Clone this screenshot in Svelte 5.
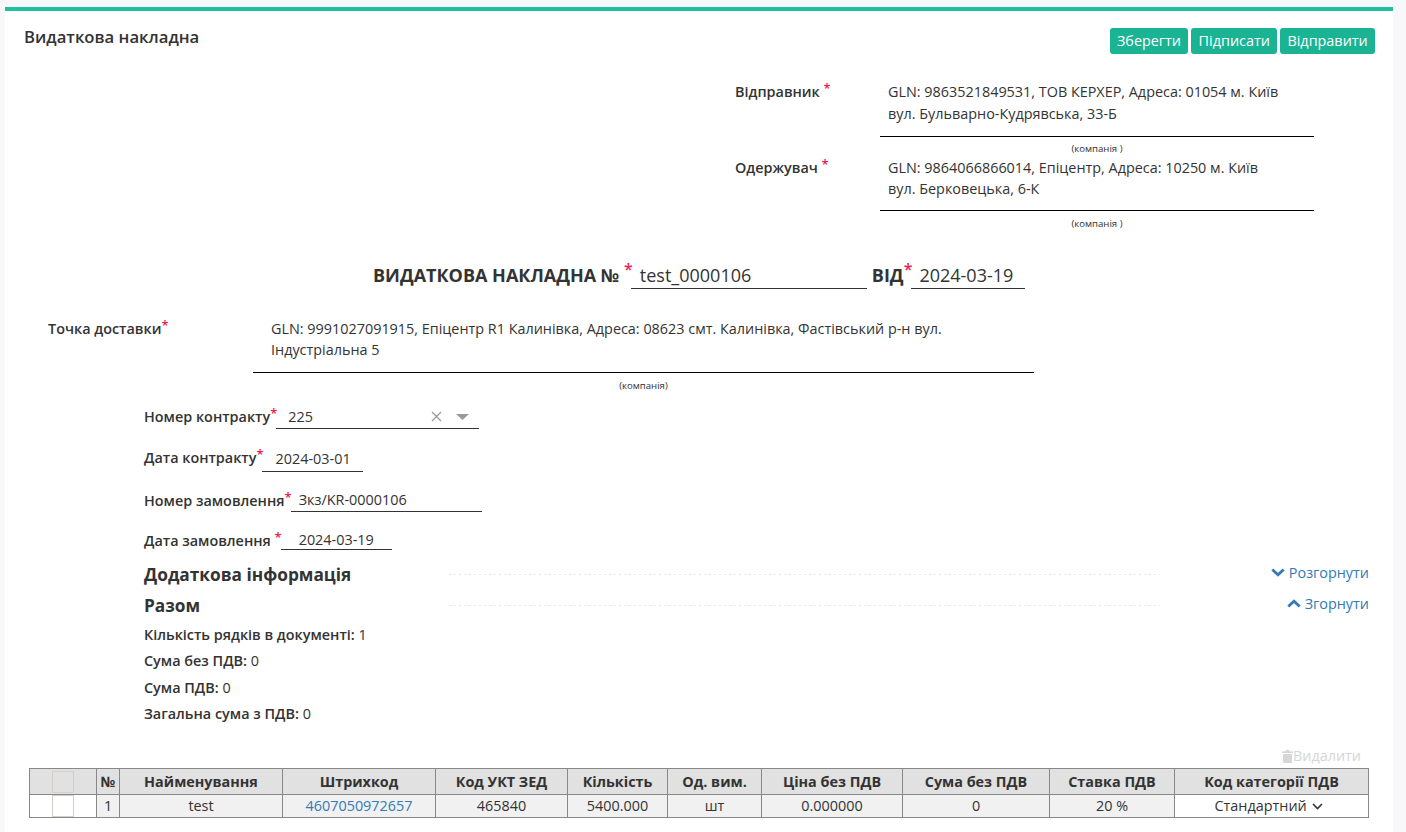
<script>
  const cols = [67, 23, 163, 153, 132, 100, 94, 141, 147, 125, 194];
  const heads = ['', '№', 'Найменування', 'Штрихкод', 'Код УКТ ЗЕД', 'Кількість', 'Од. вим.', 'Ціна без ПДВ', 'Сума без ПДВ', 'Ставка ПДВ', 'Код категорії ПДВ'];
  const cells = ['1', 'test', '4607050972657', '465840', '5400.000', 'шт', '0.000000', '0', '20 %'];
  const totals = [
    ['Кількість рядків в документі:', '1'],
    ['Сума без ПДВ:', '0'],
    ['Сума ПДВ:', '0'],
    ['Загальна сума з ПДВ:', '0']
  ];
</script>

<div class="page">
  <main class="card">
    <header class="top">
      <h5>Видаткова накладна</h5>
      <div class="btns">
        <button>Зберегти</button><button>Підписати</button><button>Відправити</button>
      </div>
    </header>

    <section class="party first">
      <div class="plabel">Відправник <sup>*</sup></div>
      <div class="pbody">
        <div class="ptext">GLN: 9863521849531, ТОВ КЕРХЕР, Адреса: 01054 м. Київ<br />вул. Бульварно-Кудрявська, 33-Б</div>
        <div class="cap">(компанія )</div>
      </div>
    </section>
    <section class="party second">
      <div class="plabel">Одержувач <sup>*</sup></div>
      <div class="pbody">
        <div class="ptext">GLN: 9864066866014, Епіцентр, Адреса: 10250 м. Київ<br />вул. Берковецька, 6-К</div>
        <div class="cap">(компанія )</div>
      </div>
    </section>

    <div class="doc">
      <span class="dt">ВИДАТКОВА НАКЛАДНА № <sup>*</sup></span>
      <span class="dv num">test_0000106</span>
      <span class="dt vid">ВІД<sup>*</sup></span>
      <span class="dv date">2024-03-19</span>
    </div>

    <section class="delivery">
      <div class="dlabel">Точка доставки<sup>*</sup></div>
      <div class="dbody">
        <div class="dtext">GLN: 9991027091915, Епіцентр R1 Калинівка, Адреса: 08623 смт. Калинівка, Фастівський р-н вул. Індустріальна 5</div>
        <div class="cap">(компанія)</div>
      </div>
    </section>

    <div class="fields">
      <div class="field f1">
        <b>Номер контракту<sup>*</sup></b>
        <span class="val sel">
          <span class="grow">225</span>
          <svg class="x" width="11" height="11" viewBox="0 0 11 11"><path d="M1 1l9 9M10 1l-9 9" stroke="#999" stroke-width="1.3" fill="none" /></svg>
          <svg class="tri" width="13" height="6" viewBox="0 0 13 6"><path d="M0 0h13L6.5 6z" fill="#999" /></svg>
        </span>
      </div>
      <div class="field f2"><b>Дата контракту<sup>*</sup></b><span class="val">2024-03-01</span></div>
      <div class="field f3"><b>Номер замовлення<sup>*</sup></b><span class="val">Зкз/KR-0000106</span></div>
      <div class="field f4"><b>Дата замовлення <sup>*</sup></b><span class="val">2024-03-19</span></div>
    </div>

    <div class="sec s1">
      <h3>Додаткова інформація</h3>
      <i class="dots"></i>
      <a href="#a" class="tog">
        <svg width="14" height="9" viewBox="0 0 14 9"><path d="M1.300 1.500l5.700 5.300 5.700-5.300" stroke="#337ab7" stroke-width="2.800" fill="none" /></svg>Розгорнути
      </a>
    </div>
    <div class="sec s2">
      <h3>Разом</h3>
      <i class="dots"></i>
      <a href="#a" class="tog">
        <svg width="14" height="9" viewBox="0 0 14 9"><path d="M1.300 7.500l5.700-5.300 5.700 5.300" stroke="#337ab7" stroke-width="2.800" fill="none" /></svg>Згорнути
      </a>
    </div>

    <div class="totals">
      {#each totals as [k, v]}
        <div class="trow"><b>{k}</b> {v}</div>
      {/each}
    </div>

    <div class="del">
      <svg width="11" height="13" viewBox="0 0 11 13"><path d="M4 0h3l1 1.500h3V3H0V1.500h3zM1 4h9v8a1 1 0 0 1-1 1H2a1 1 0 0 1-1-1z" fill="#d6d6d6" /></svg>Видалити
    </div>

    <table>
      <colgroup>
        {#each cols as w}<col style="width:{w}px" />{/each}
      </colgroup>
      <thead>
        <tr>
          {#each heads as h, i}
            <th>{#if i === 0}<span class="chk head"></span>{:else}{h}{/if}</th>
          {/each}
        </tr>
      </thead>
      <tbody>
        <tr>
          <td class="w"><span class="chk"></span></td>
          {#each cells as c, i}
            <td>{#if i === 2}<a href="#b">{c}</a>{:else}{c}{/if}</td>
          {/each}
          <td class="w last">Стандартний
            <svg class="chev" width="11" height="7" viewBox="0 0 11 7"><path d="M1 1l4.500 4.500L10 1" stroke="#333" stroke-width="1.600" fill="none" /></svg>
          </td>
        </tr>
      </tbody>
    </table>
  </main>
</div>

<style>
  :global(body) {
    margin: 0;
    background: #f8f8fb;
    font-family: "Open Sans", "Noto Sans", sans-serif;
    font-size: 14.4px;
    color: #333;
  }
  .page { padding: 7px 13px 0 5px; height: 825px; overflow: hidden; }
  .card { background: #fff; border-top: 4px solid #1fc0a0; height: 821px; }
  sup { color: #ed1c4f; font-size: 13px; line-height: 0; vertical-align: 4px; font-weight: 600; }
  b { font-weight: 600; }

  .top { display: flex; justify-content: space-between; padding: 0 18px 0 19px; height: 43px; }
  h5 { margin: 15px 0 0; font-size: 16.7px; font-weight: 600; line-height: 22px; color: #333; }
  .btns { display: flex; gap: 3px; margin-top: 17px; height: 26px; }
  button {
    height: 26px; padding: 0 7.3px; border: 0; border-radius: 3px;
    background: #1ab394; color: #fff; font: 14.4px/1 "Open Sans", sans-serif;
  }

  .party { display: flex; margin-left: 730px; }
  .first { margin-top: 27px; }
  .second { margin-top: 2px; }
  .plabel { width: 145px; font-weight: 600; line-height: 21.6px; flex: none; }
  .pbody { width: 434px; }
  .ptext { padding: 0 8px 12px; line-height: 21.6px; border-bottom: 1px solid #000; }
  .second .ptext { padding-bottom: 11px; line-height: 21px; }
  .cap { text-align: center; font-size: 9.6px; line-height: 12px; margin-top: 6px; }
  .second .cap { margin-top: 7px; }

  .doc { display: flex; align-items: flex-end; margin: 24px 0 0 368px; height: 34px; }
  .dt { font-size: 18px; font-weight: 700; line-height: 25px; white-space: pre; }
  .dt sup { font-size: 16px; vertical-align: 7px; }
  .dv { font-size: 18px; line-height: 25px; border-bottom: 1px solid #333; padding-left: 9px; box-sizing: border-box; margin-bottom: -1px; }
  .num { width: 236px; margin-left: -2px; }
  .vid { margin-left: 5px; }
  .date { width: 114px; margin-left: -1px; padding-left: 8px; }

  .delivery { display: flex; margin: 30px 0 0 43px; }
  .dlabel { width: 205px; font-weight: 600; line-height: 21.6px; flex: none; }
  .dbody { width: 781px; }
  .dtext { padding: 0 80px 12px 18px; line-height: 21px; border-bottom: 1px solid #000; }
  .delivery .cap { margin-top: 7px; }

  .fields { margin-left: 139px; margin-top: 14.4px; }
  .field { display: flex; align-items: flex-end; line-height: 20px; }
  .field b { white-space: pre; }
  .val { border-bottom: 1px solid #333; box-sizing: border-box; height: 21px; }
  .f1 b { margin-bottom: 2px; }
  .f1 .val { width: 203px; padding: 0 10px 2px 12px; display: flex; align-items: center; margin-left: -1px; }
  .grow { flex: 1; }
  .x { margin-right: 14px; }
  .f2 { margin-top: 19px; }
  .f2 b { margin-bottom: 4px; }
  .f2 .val { width: 101px; height: 23px; padding-left: 14px; margin-left: -2px; }
  .f3 { margin-top: 18px; }
  .f3 b { margin-bottom: 1px; }
  .f3 .val { width: 191px; height: 22px; padding-left: 8px; margin-left: -1px; }
  .f4 { margin-top: 18px; }
  .f4 b { margin-bottom: -1px; }
  .f4 .val { width: 111px; height: 20px; padding-left: 18px; margin-left: -1px; }

  .sec { display: flex; align-items: center; height: 24px; margin-left: 139px; margin-right: 24px; }
  .s1 { margin-top: 13px; }
  .s2 { margin-top: 7px; }
  h3 { margin: 0; width: 305px; flex: none; font-size: 17.28px; font-weight: 700; line-height: 24px; color: #333; }
  .dots {
    width: 711px; flex: none; height: 1px; margin-top: 0;
    background: repeating-linear-gradient(90deg, #e8e8e8 0 2px, transparent 2px 5px);
  }
  a { color: #337ab7; text-decoration: none; }
  .tog { margin-left: auto; font-size: 14.4px; display: flex; align-items: center; gap: 4px; margin-bottom: 4px; }
  .tog svg { flex: none; }

  .totals { margin: 4.3px 0 0 139px; }
  .trow { height: 26.4px; line-height: 26px; }

  .del { margin: 19.7px 32px 0 0; display: flex; justify-content: flex-end; align-items: center; color: #d6d6d6; font-size: 14.4px; line-height: 18px; height: 18px; }

  table { margin: 3px 0 0 24px; border-collapse: collapse; table-layout: fixed; width: 1339px; text-align: center; font-size: 14.4px; }
  th, td { border: 1px solid #888; padding: 0; overflow: hidden; white-space: nowrap; }
  th { background: #e1e1e1; font-weight: 700; height: 25px; font-size: 14.4px; }
  td { background: #f1f1f1; height: 22px; line-height: 22px; }
  td.w { background: #fff; }
  td.last { padding-right: 5px; }
  .chk { display: block; width: 20px; height: 20px; border: 1px solid #d3cfc8; margin: 0 auto; background: #fff; }
  .chk.head { background: #e1e1e1; }
  .chev { margin-left: 2px; vertical-align: 1px; }
</style>
